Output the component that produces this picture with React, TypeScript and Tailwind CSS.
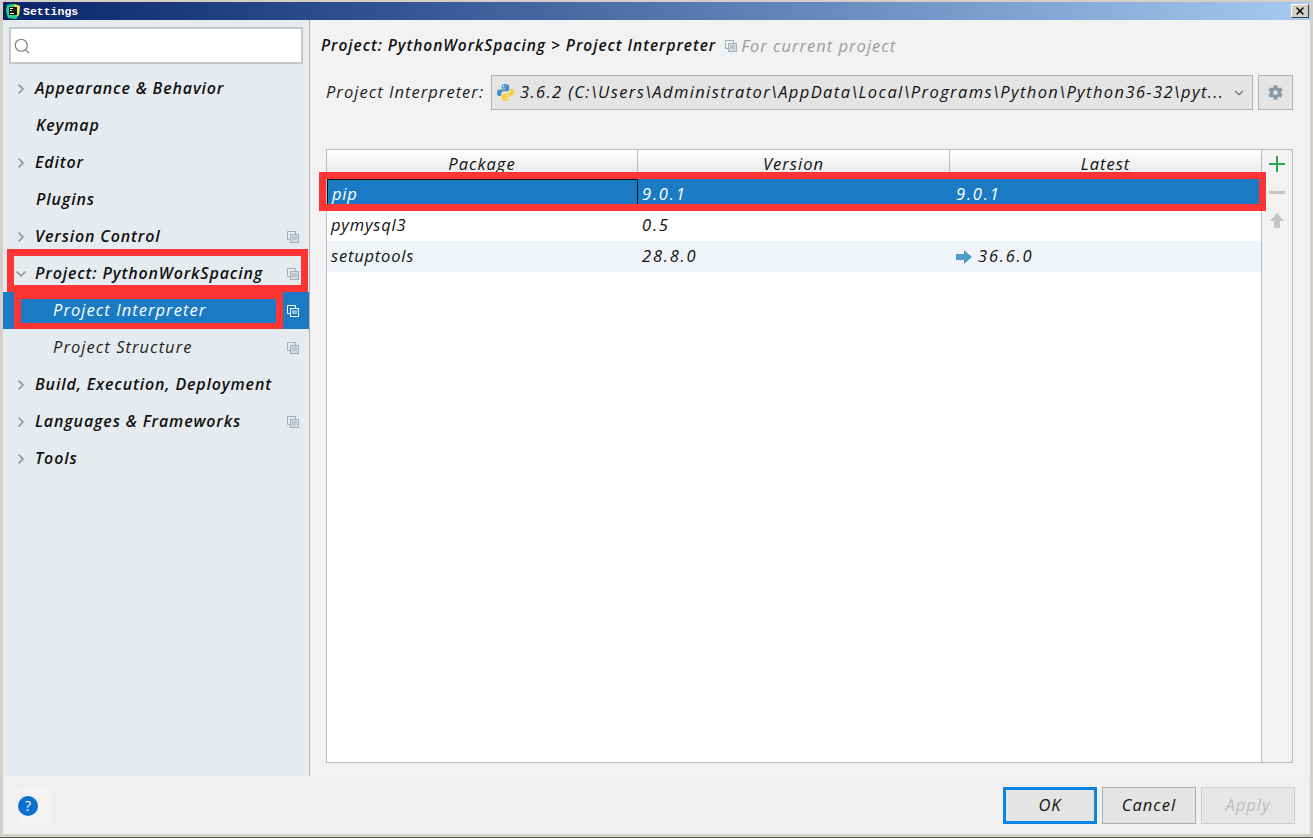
import React from 'react';
import { ChevronDown, ChevronRight, Search, X } from 'lucide-react';
import { FaCog } from 'react-icons/fa';

const font = { fontFamily: '"Open Sans", "Noto Sans", sans-serif' };

const CopyIcon = ({ light = false }: { light?: boolean }) => (
  <svg width="12" height="12" viewBox="0 0 12 12" fill="none" stroke={light ? '#ffffff' : '#a3aeb8'} strokeWidth="1">
    <path d="M3.5 8.5h-3v-8h8v3" />
    <rect x="3.5" y="3.500" width="8" height="8" fill={light ? '#1a7bc4' : '#d5dce2'} />
    <path d="M5 6h5M5 8h5" />
  </svg>
);

const PythonLogo = () => (
  <svg width="19" height="19" viewBox="0 0 20 20">
    <path d="M9.8 1C6.5 1 6 2.300 6 3.600V6h4v.8H3.600C2 6.800 1 8.100 1 10.200c0 2.200 1 3.600 2.600 3.600H5.500v-2.400c0-1.500 1.200-2.700 2.700-2.700h3.500c1.200 0 2.200-1 2.200-2.200V3.600C13.900 2.100 12.400 1 9.800 1z" fill="#4a90c8" />
    <path d="M10.200 19c3.300 0 3.800-1.300 3.800-2.600V14h-4v-.8h6.400c1.600 0 2.600-1.300 2.600-3.400 0-2.200-1-3.600-2.600-3.600H14.500v2.400c0 1.500-1.200 2.700-2.700 2.700H8.300c-1.200 0-2.200 1-2.200 2.200v3.100C6.100 17.900 7.600 19 10.200 19z" fill="#f7cf3e" />
    <circle cx="8" cy="3.500" r="0.900" fill="#fff" />
    <circle cx="12" cy="16.500" r="0.900" fill="#fff" />
  </svg>
);

const PyCharmLogo = () => (
  <svg width="14" height="15" viewBox="0 0 14 15">
    <path d="M1 1l7-1 6 2-1 9-3 4-8-1-2-7z" fill="#21d789" />
    <path d="M8 0l6 2-1 9-3 1z" fill="#f5e23c" />
    <rect x="3" y="3" width="8" height="8" fill="#111111" />
    <rect x="4" y="4" width="3" height="1" fill="#ffffff" />
    <rect x="4" y="6" width="2" height="1" fill="#ffffff" />
    <rect x="4" y="9" width="4" height="1" fill="#ffffff" />
  </svg>
);

type NavItem = {
  label: string;
  arrow?: 'right' | 'down';
  copy?: boolean;
  sub?: boolean;
  selected?: boolean;
};

const navItems: NavItem[] = [
  { label: 'Appearance & Behavior', arrow: 'right' },
  { label: 'Keymap' },
  { label: 'Editor', arrow: 'right' },
  { label: 'Plugins' },
  { label: 'Version Control', arrow: 'right', copy: true },
  { label: 'Project: PythonWorkSpacing', arrow: 'down', copy: true },
  { label: 'Project Interpreter', sub: true, selected: true, copy: true },
  { label: 'Project Structure', sub: true, copy: true },
  { label: 'Build, Execution, Deployment', arrow: 'right' },
  { label: 'Languages & Frameworks', arrow: 'right', copy: true },
  { label: 'Tools', arrow: 'right' },
];

const NavRow = ({ item }: { item: NavItem }) => (
  <div className={`flex h-[37px] items-center pr-[10px] ${item.selected ? 'bg-[#1a7bc4]' : ''}`}>
    <div className="flex w-[32px] shrink-0 justify-end pr-[6px]">
      {item.arrow === 'right' && <ChevronRight size={16} strokeWidth={2.6} className="text-[#8e9398]" />}
      {item.arrow === 'down' && <ChevronDown size={16} strokeWidth={2.6} className="text-[#8e9398]" />}
    </div>
    <span
      className={`flex-1 whitespace-nowrap italic ${
        item.sub
          ? `pl-[18px] text-[16.5px] tracking-[1.05px] ${item.selected ? 'text-white' : 'text-[#222222]'}`
          : 'pb-[2px] text-[16px] font-semibold tracking-[0.85px] text-[#111111]'
      } ${!item.sub && !item.arrow ? 'pl-[1px]' : ''}`}
    >
      {item.label}
    </span>
    {item.copy && <CopyIcon light={item.selected} />}
  </div>
);

const rows = [
  { name: 'pip', version: '9.0.1', latest: '9.0.1', selected: true },
  { name: 'pymysql3', version: '0.5', latest: '' },
  { name: 'setuptools', version: '28.8.0', latest: '36.6.0', upgrade: true, striped: true },
];

export default function App() {
  return (
    <div
      className="relative flex h-[838px] w-[1313px] flex-col overflow-hidden border-b-[1px] border-b-[#555555] bg-[#d4d0c8] pb-[3px] pl-[3px] pr-[3px] pt-[2px] text-[#111111]"
      style={font}
    >
      {/* title bar */}
      <div className="flex h-[18px] shrink-0 items-center bg-gradient-to-r from-[#0a246a] to-[#a6caf0] pl-[3px] pr-[1px]">
        <PyCharmLogo />
        <span className="ml-[3px] flex-1 pt-[1px] text-[11.5px] font-bold text-white" style={{ fontFamily: '"Liberation Mono", monospace' }}>
          Settings
        </span>
        <div className="flex h-[14px] w-[18px] items-center justify-center border border-t-white border-l-white border-r-[#404040] border-b-[#404040] bg-[#d4d0c8]">
          <X size={12} strokeWidth={3} className="text-black" />
        </div>
      </div>

      {/* body */}
      <div className="flex min-h-0 flex-1">
        <div className="flex w-[307px] shrink-0 flex-col border-r border-r-[#b4b4b4] bg-[#e6ebf0]">
          <div className="mx-[6px] mb-[6px] mt-[7px] flex h-[37px] items-center border-2 border-[#c3c8cc] bg-white pl-[2px]">
            <Search size={18} strokeWidth={1.5} className="text-[#808080]" />
          </div>
          {navItems.map((item) => (
            <NavRow key={item.label} item={item} />
          ))}
        </div>

        <div className="flex min-w-0 flex-1 flex-col bg-[#f2f2f2] pb-[13px] pl-[16px] pr-[17px]">
          <div className="-ml-[5px] mt-[14px] flex h-[24px] items-center whitespace-nowrap">
            <span className="text-[15.5px] font-semibold italic tracking-[0.98px] text-[#111111]">Project: PythonWorkSpacing &gt; Project Interpreter</span>
            <span className="ml-[9px] mr-[4px] flex">
              <CopyIcon />
            </span>
            <span className="text-[16.5px] italic tracking-[1px] text-[#9b9b9b]">For current project</span>
          </div>

          <div className="mt-[17px] flex h-[35px] items-center">
            <span className="w-[165px] whitespace-nowrap text-[16.5px] italic tracking-[1.03px] text-[#222222]">Project Interpreter:</span>
            <div className="flex h-full min-w-0 flex-1 items-center border border-[#b4b4b4] bg-[#e4e4e4] pl-[4px] pr-[6px]">
              <PythonLogo />
              <span className="ml-[5px] flex-1 whitespace-nowrap text-[16.5px] italic tracking-[1.39px]">
                3.6.2 (C:\Users\Administrator\AppData\Local\Programs\Python\Python36-32\pyt...
              </span>
              <ChevronDown size={14} strokeWidth={2} className="shrink-0 text-[#6e6e6e]" />
            </div>
            <div className="ml-[5px] flex h-full w-[35px] items-center justify-center border border-[#b4b4b4] bg-[#e4e4e4]">
              <FaCog size={15} className="text-[#8a98a4]" />
            </div>
          </div>

          {/* package table */}
          <div className="mt-[39px] flex min-h-0 flex-1 border border-[#bcbcbc] bg-white">
            <div className="flex min-w-0 flex-1 flex-col">
              <div className="grid h-[29px] shrink-0 grid-cols-[311px_312px_1fr] bg-gradient-to-b from-white to-[#e4e4e4]">
                {['Package', 'Version', 'Latest'].map((title, i) => (
                  <div
                    key={title}
                    className={`pt-[2px] text-center text-[16.5px] italic tracking-[1px] ${i < 2 ? 'border-r border-r-[#bcbcbc]' : ''}`}
                  >
                    {title}
                  </div>
                ))}
              </div>
              {rows.map((row) => (
                <div
                  key={row.name}
                  className={`grid h-[31px] grid-cols-[311px_312px_1fr] items-center text-[16.5px] italic ${
                    row.selected ? 'bg-[#1a7bc4] text-white' : row.striped ? 'bg-[#f0f4f9]' : 'bg-white'
                  }`}
                >
                  <div className={`flex h-full items-center pl-[4px] tracking-[0.8px] ${row.selected ? 'border border-[#111111]' : ''}`}>{row.name}</div>
                  <div className="pl-[4px] tracking-[1.8px]">{row.version}</div>
                  <div className="flex items-center pl-[6px] tracking-[1.8px]">
                    {row.upgrade && (
                      <svg width="16" height="14" viewBox="0 0 16 14" className="mr-[6px]">
                        <path d="M0 4h8V0l8 7-8 7v-4H0z" fill="#4f9cc6" />
                      </svg>
                    )}
                    {row.latest}
                  </div>
                </div>
              ))}
            </div>
            <div className="flex w-[31px] shrink-0 flex-col items-center gap-[12px] border-l border-l-[#bcbcbc] bg-[#f2f2f2] pt-[6px]">
              <svg width="16" height="16" viewBox="0 0 16 16">
                <path d="M7 0h2v7h7v2H9v7H7V9H0V7h7z" fill="#2fa84f" />
              </svg>
              <svg width="16" height="16" viewBox="0 0 16 16">
                <rect x="0" y="7" width="16" height="3" fill="#c4c4c4" />
              </svg>
              <svg width="14" height="16" viewBox="0 0 14 16">
                <path d="M7 1l7 8H10v7H4V9H0z" fill="#c4c4c4" />
              </svg>
            </div>
          </div>
        </div>
      </div>

      {/* footer */}
      <div className="flex h-[58px] shrink-0 items-center justify-between border-t border-t-[#ececec] bg-[#f0f0f0] pl-[15px] pr-[15px]">
        <div className="flex h-[37px] w-[33px] items-center bg-[#f3f3f3]">
          <div className="flex h-[20px] w-[20px] items-center justify-center rounded-full bg-[#0a70cc] text-[14px] leading-none text-white">?</div>
        </div>
        <div className="flex gap-[5px] text-[16.5px] italic tracking-[1px]">
          <div className="flex h-[37px] w-[94px] items-center justify-center border-[3px] border-[#0a84e0] bg-[#e4e4e4]">OK</div>
          <div className="flex h-[37px] w-[94px] items-center justify-center border border-[#adadad] bg-[#e4e4e4]">Cancel</div>
          <div className="flex h-[37px] w-[94px] items-center justify-center border border-[#cfcfcf] bg-[#e6e6e6] text-[#bdbdbd]">Apply</div>
        </div>
      </div>

      {/* red annotations drawn over the screenshot */}
      <div className="pointer-events-none absolute left-[7px] top-[249px] h-[43px] w-[301px] border-[7px] border-[#ff3535]" />
      <div className="pointer-events-none absolute left-[14px] top-[292px] h-[37px] w-[269px] border-[7px] border-b-[6px] border-[#ff3535]" />
      <div className="pointer-events-none absolute left-[319px] top-[172px] h-[39px] w-[947px] border-[7px] border-[#ff3535]" />
    </div>
  );
}
